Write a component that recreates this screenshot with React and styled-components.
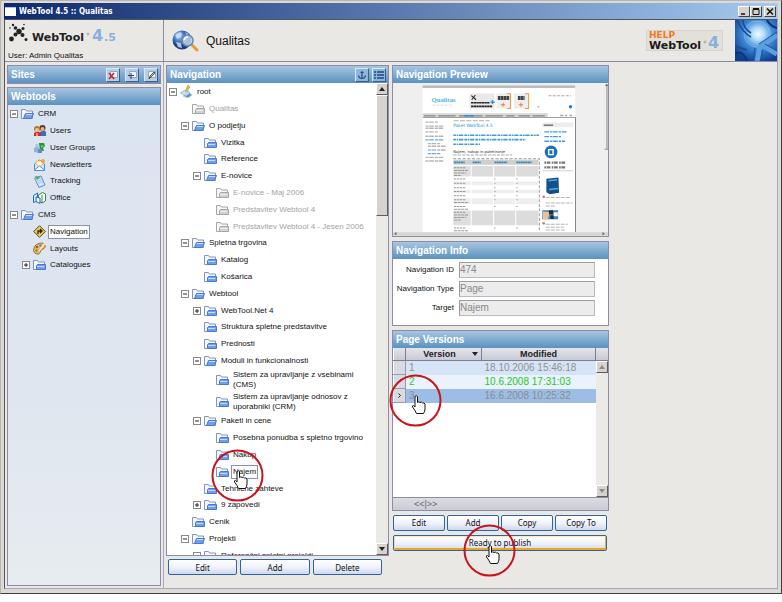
import React from "react";
import styled, { createGlobalStyle, css } from "styled-components";

const GlobalStyle = createGlobalStyle`
  * {
    box-sizing: border-box;
  }
  body {
    margin: 0;
    background: #ffffff;
    font-family: "Liberation Sans", Arial, sans-serif;
    font-size: 8px;
    color: #111111;
  }
  ul {
    list-style: none;
    margin: 0;
    padding: 0;
  }
  button, input {
    font-family: inherit;
    margin: 0;
    padding: 0;
  }
  svg {
    display: block;
    flex-shrink: 0;
  }
`;

/* ---------- window ---------- */

const Window = styled.div`
  display: flex;
  flex-direction: column;
  height: calc(100vh - 8px);
  padding: 2px 3px 4px;
  background: #dddad5;
  border: 1px solid #b8b5b0;
  border-right-color: #404040;
  border-bottom-color: #404040;
`;

const TitleBar = styled.header`
  display: flex;
  align-items: center;
  gap: 3px;
  height: 16px;
  flex-shrink: 0;
  padding: 0 2px 0 1px;
  background: linear-gradient(to right, #0d286c, #a6caf0);
`;

const TitleIcon = styled.span`
  width: 11px;
  height: 9px;
  background: #ffffff;
  border-top: 1px solid #a9c6ef;
`;

const TitleText = styled.h1`
  flex: 1;
  margin: 0;
  font: bold 8px "DejaVu Sans Condensed", "Open Sans", sans-serif;
  color: #ffffff;
`;

const WindowButtons = styled.div`
  display: flex;

  & > :last-child {
    margin-left: 2px;
  }
`;

const WindowButton = styled.button`
  width: 12px;
  height: 11px;
  background: #d6d3ce;
  border: 1px solid;
  border-color: #ffffff #404040 #404040 #ffffff;
`;

const Content = styled.div`
  display: flex;
  flex-direction: column;
  flex: 1;
  min-height: 0;
  background: #eae8e5;
  border: 1px solid #55555c;
  border-right-color: #aaa8bc;
  border-bottom-color: #aaa8bc;
`;

const TopBar = styled.div`
  display: grid;
  grid-template-columns: 159px 1fr auto auto;
  height: 42px;
  flex-shrink: 0;
  border-bottom: 1px solid #8d8ca6;
`;

const Brand = styled.div`
  display: flex;
  flex-direction: column;
  justify-content: space-between;
  padding: 2px 3px 1px;
  border-right: 1px solid #8d8ca6;
`;

const SiteTitle = styled.div`
  display: flex;
  align-items: center;
  gap: 7px;
  padding-left: 8px;
  font-size: 12px;
`;

const HelpLink = styled.a`
  align-self: center;
  margin-right: 12px;
  text-decoration: none;
`;

const Columns = styled.main`
  display: grid;
  grid-template-columns: 159px 225px 220px 1fr;
  flex: 1;
  min-height: 0;
`;

const SideColumn = styled.nav`
  display: flex;
  flex-direction: column;
  gap: 3px;
  min-height: 0;
  padding: 3px 2px 2px 2px;
  border-right: 1px solid #a9a8bf;
`;

const TreeColumn = styled.section`
  display: flex;
  flex-direction: column;
  gap: 3px;
  min-height: 0;
  margin-left: 2px;
  padding: 3px 0 13px;
`;

const DetailColumn = styled.section`
  display: flex;
  flex-direction: column;
  gap: 4px;
  padding: 3px 0 0 3px;
`;

/* ---------- panels ---------- */

const Panel = styled.div`
  display: flex;
  flex-direction: column;
  min-height: 0;
  flex: ${({ $grow }) => ($grow ? 1 : "none")};
  border: 1px solid #8d8ca6;
`;

const PanelHeader = styled.div`
  display: flex;
  align-items: center;
  justify-content: space-between;
  height: 17px;
  flex-shrink: 0;
  padding: 0 2px 0 3px;
  background: linear-gradient(to bottom, #a8c5e2, #5a92c0);
`;

const PanelTitle = styled.h2`
  margin: 0;
  font-size: 10px;
  font-weight: bold;
  color: #ffffff;
`;

const HeaderTools = styled.div`
  display: flex;
  gap: ${({ $gap }) => $gap || 3}px;
`;

const ToolButton = styled.button`
  display: grid;
  place-items: center;
  width: 14px;
  height: 14px;
  background: ${({ $plain }) => ($plain ? "#8fb5da" : "#b9cde4")};
  border: 1px solid;
  border-color: #d9e8f6 #3c5f86 #3c5f86 #d9e8f6;
`;

const SideTree = styled.ul`
  flex: 1;
  padding-left: 2px;
  background: linear-gradient(to bottom, #dbe4f1, #dfe6ef 60%, #e6ecef);
`;

const TreeBody = styled.div`
  display: flex;
  flex: 1;
  min-height: 0;
  background: #ffffff;
`;

const NavTree = styled.ul`
  flex: 1;
  min-width: 0;
  overflow: hidden;
  padding-left: 2px;
`;

const TreeItem = styled.li`
  position: relative;
  display: flex;
  align-items: center;
  height: 17px;
  padding-left: ${({ $depth }) => $depth * 12}px;
  color: ${({ $muted }) => ($muted ? "#a3a3a3" : "#111111")};

  &:nth-child(5n) {
    height: 16px;
  }

  ${({ $tall }) =>
    $tall &&
    css`
      && {
        height: 22px;
      }
    `}
`;

const ToggleSlot = styled.span`
  width: 8px;
  margin-right: 3px;
`;

const Toggle = styled.button`
  display: block;
  width: 8px;
  height: 8px;
  background: #ffffff;
  border: 1px solid #8a8a8a;
`;

const TreeLabel = styled.span`
  margin-left: 3px;
  padding: 1px;
  line-height: 10px;
  white-space: pre-line;
  ${({ $selected }) =>
    $selected &&
    css`
      background: #ffffff;
      outline: 1px solid #8b93a5;
    `}
`;

/* ---------- scroll bars ---------- */

const ScrollBar = styled.div`
  display: flex;
  flex-direction: column;
  width: 12px;
  flex-shrink: 0;
  background: #eceae7;
`;

const ScrollButton = styled.button`
  display: grid;
  place-items: center;
  height: 12px;
  color: ${({ $idle }) => ($idle ? "#8a8a8a" : "#222222")};
  background: #d6d3ce;
  border: 1px solid;
  border-color: #ffffff #5c5c5c #5c5c5c #ffffff;
`;

const ScrollTrack = styled.div`
  flex: 1;
`;

const ScrollThumb = styled.div`
  height: 27%;
  background: #d6d3ce;
  border: 1px solid;
  border-color: #ffffff #5c5c5c #5c5c5c #ffffff;
`;

/* ---------- buttons ---------- */

const ButtonRow = styled.div`
  display: grid;
  grid-auto-flow: column;
  grid-auto-columns: 1fr;
  gap: ${({ $inset }) => ($inset ? 3 : 2)}px;
  padding: ${({ $inset }) => ($inset ? "0 7px 0 2px" : "0 2px 0 1px")};
`;

const ActionButton = styled.button`
  position: relative;
  height: 16px;
  font: 8px "Noto Sans", "Open Sans", sans-serif;
  color: #111111;
  background: linear-gradient(to bottom, #ffffff, #f0f3fb 50%, #cfd8ee);
  border: 1px solid #2f659c;
  border-radius: 2px;
  ${({ $hot }) =>
    $hot &&
    css`
      box-shadow: inset 0 1px #ffe9b5, inset 1px 0 #fbd78b, inset -1px 0 #f2b13c,
        inset 0 -2px #eda51c;
    `}
`;

/* ---------- details ---------- */

const PreviewFrame = styled.div`
  background: #efefef;
`;

const InfoForm = styled.form`
  display: grid;
  grid-template-columns: 61px 1fr;
  gap: 3px 5px;
  padding: 3px 13px 9px 0;
  background: #ffffff;
`;

const FieldLabel = styled.label`
  padding-top: 3px;
  text-align: right;
  white-space: nowrap;
`;

const Field = styled.input`
  width: 100%;
  min-width: 0;
  height: 16px;
  font-size: 10px;
  color: #8a8a8a;
  background: #ececec;
  border: 1px solid;
  border-color: #9c9ca4 #b9b9bf #b9b9bf #9c9ca4;
`;

const VersionsBody = styled.div`
  display: flex;
  height: 149px;
  background: #ffffff;
`;

const TableArea = styled.div`
  flex: 1;
`;

const VersionsTable = styled.table`
  width: 100%;
  table-layout: fixed;
  border-collapse: collapse;

  col:first-child {
    width: 12px;
  }
  col:nth-child(2) {
    width: 76px;
  }
`;

const HeadCell = styled.th`
  position: relative;
  height: 13px;
  padding: 0;
  font-size: 9px;
  font-weight: bold;
  color: #222222;
  background: linear-gradient(to bottom, #e4e4ea, #c8cad4);
  border-right: 1px solid #7c7c92;
  border-bottom: 1px solid #7c7c92;
`;

const HeadLabel = styled.span`
  display: flex;
  align-items: center;
  justify-content: center;
  padding-right: 8px;

  svg {
    position: absolute;
    right: 3px;
  }
`;

const rowColors = {
  old: ["#d5e4f6", "#909090"],
  live: ["#ebf2fb", "#18cc24"],
  current: ["#9cbde6", "#8a8c92"],
};

const VersionRow = styled.tr`
  background: ${({ $state }) => rowColors[$state][0]};
  color: ${({ $state }) => rowColors[$state][1]};
`;

const Cell = styled.td`
  position: relative;
  height: 14px;
  padding: 0 3px;
  font-size: 10px;
  line-height: 12px;
  white-space: nowrap;
`;

const MarkerCell = styled(Cell)`
  padding: 0 4px;
  background: #d9dbe3;
  border: 1px solid;
  border-color: #ffffff #9a9aae #9a9aae #ffffff;
`;

const ScrollHead = styled.div`
  height: 13px;
  background: linear-gradient(to bottom, #e4e4ea, #c8cad4);
  border-bottom: 1px solid #7c7c92;
`;

const Splitter = styled.div`
  height: 13px;
  padding-left: 21px;
  font-size: 9px;
  line-height: 12px;
  color: #666672;
  background: linear-gradient(to bottom, #dcdde3, #cbccd4);
  border-top: 1px solid #8d8ca6;
`;

const Callout = styled.span`
  position: absolute;
  z-index: 5;
  left: ${({ $x }) => $x};
  top: ${({ $y }) => $y}px;
  pointer-events: none;
`;

/* ---------- drawings ---------- */

const Arrow = ({ up }) => (
  <svg width="6" height="4" viewBox="0 0 6 4">
    <path d={up ? "M3 0L6 4H0z" : "M0 0h6L3 4z"} fill="currentColor" />
  </svg>
);

const HandCircle = ({ x, y }) => (
  <Callout $x={x} $y={y} aria-hidden="true">
    <svg width="53" height="53" viewBox="0 0 53 53">
      <circle cx="26.500" cy="26.500" r="25" fill="none" stroke="#c8151b" strokeWidth="2" />
      <path
        d="M26 22.500q1.500-1.500 2.500 0v6q1.500-1.500 2.500 0 1.500-1 2.500.5 1.500-.5 2.500 1V35q0 2-1.500 4.500h-7Q26 36 23.500 33q-.5-1.500 1-1.500L26 33z"
        fill="#fff"
        stroke="#111"
      />
    </svg>
  </Callout>
);

const Folder = ({ open, muted }) => {
  const edge = muted ? "#a6a6a6" : "#8296bd";
  const fill = muted ? "#d2d2d2" : "#6f9fee";
  return (
    <svg width="13" height="12" viewBox="0 0 13 12">
      <path d="M.5 10.500v-9h4l1 1.500h6v7.500z" fill="#f4f7fd" stroke={edge} />
      <path d={open ? "M2.500 10.500l2-5h8l-2 5z" : "M3.500 10.500V7l1-1.500h8v5z"} fill={fill} stroke={muted ? edge : "#4a78cc"} />
      <path d={open ? "M5 6.500h6" : "M4 7.500h7"} stroke={muted ? "#eee" : "#c5dbff"} />
    </svg>
  );
};

const RootIcon = () => (
  <svg width="13" height="13" viewBox="0 0 13 13">
    <path d="M3 11l5-5 4 4-4 3z" fill="#4f93d8" stroke="#b5cfe9" />
    <path d="M0 8l5-3 5 3-4 3z" fill="#c4dcf3" stroke="#8fb4dc" strokeWidth=".6" />
    <path d="M8 0L5.500 6l1 1 3.500-5z" fill="#e9bf42" stroke="#99792c" strokeWidth=".5" />
  </svg>
);

const UsersIcon = () => (
  <svg width="13" height="13" viewBox="0 0 13 13">
    <path d="M7 12V8l2-1h3l1 1v4z" fill="#3a6fc0" />
    <circle cx="9.500" cy="4" r="3" fill="#5b3423" />
    <circle cx="9.500" cy="5" r="2" fill="#e8b487" />
    <path d="M1 12V9l2-1h3l2 1v3z" fill="#cf2c26" />
    <circle cx="4" cy="5" r="3" fill="#b3742c" />
    <circle cx="4" cy="6" r="2" fill="#f1c79a" />
    <path d="M3.500 9h1v3h-1z" fill="#fff" />
  </svg>
);

const GroupsIcon = () => (
  <svg width="13" height="13" viewBox="0 0 13 13">
    <path d="M1 11V7l2-1h3v6z" fill="#8fb5d8" />
    <circle cx="4" cy="4.500" r="1.800" fill="#a8c8e4" />
    <path d="M6 2h5l1 3-2 2 1 3H7z" fill="#299343" />
    <path d="M8 4l3 1-3 2z" fill="#7ad06c" />
    <path d="M5 8h4v4H5z" fill="#5c8fc9" />
  </svg>
);

const NewsIcon = () => (
  <svg width="13" height="13" viewBox="0 0 13 13">
    <path d="M1.500 12.500V6L6.500 2l5 4v6.500z" fill="#cfe6fb" stroke="#4b8fd0" />
    <path d="M3 6V3h7v3L6.500 9z" fill="#fff4cf" stroke="#e2a23d" strokeWidth=".7" />
    <path d="M1.500 12L6.500 8l5 4" fill="#fff" stroke="#4b8fd0" />
    <circle cx="10" cy="3" r="2" fill="#f0a53a" />
  </svg>
);

const TrackingIcon = () => (
  <svg width="13" height="13" viewBox="0 0 13 13">
    <path d="M1.500 3L8 1l4 9-6 2.500z" fill="#d6e7fc" stroke="#5b8bd0" />
    <path d="M3 4l5-1M4 6l5-1M5 8l5-1" stroke="#a5c4f0" />
    <path d="M2 1l5 1-3 3z" fill="#41b34c" />
  </svg>
);

const OfficeIcon = () => (
  <svg width="13" height="13" viewBox="0 0 13 13">
    <path d="M.5 4.500L4.500 2v8l-4 1.500z" fill="#d5e9ff" stroke="#2769c5" />
    <path d="M5.500 4l4-2.500 3 1.500v7L9 12l-3.500-2z" fill="#fff" stroke="#2f8d4c" />
    <path d="M3 6l4 1v5.500l-4-2z" fill="#eaf4ff" stroke="#2769c5" />
    <path d="M9 4v8" stroke="#2f8d4c" />
  </svg>
);

const SignIcon = () => (
  <svg width="13" height="13" viewBox="0 0 13 13">
    <path d="M6.500.7l5.800 5.800-5.800 5.800L.7 6.500z" fill="#f2cd55" stroke="#57461e" />
    <path d="M5 9V6h3M7 4l2 2-2 2" fill="none" stroke="#222" strokeWidth="1.300" />
  </svg>
);

const PaletteIcon = () => (
  <svg width="13" height="13" viewBox="0 0 13 13">
    <path d="M6 1.500c4-1.500 7 1 6 4-1 2-3 1-4 3s-1 4-4 3.500S0 9 1 6s3-4 5-4.500z" fill="#eab667" stroke="#a86d2b" />
    <circle cx="4" cy="5" r="1.200" fill="#d6372e" />
    <circle cx="7.500" cy="3.500" r="1.200" fill="#4d8edb" />
    <circle cx="3.500" cy="8.500" r="1.200" fill="#55a944" />
    <path d="M12 1L6 9" stroke="#f8f1d6" strokeWidth="1.300" />
  </svg>
);

const WebToolLogo = () => (
  <svg width="112" height="27" viewBox="0 0 112 27" role="img" aria-label="WebTool 4.5">
    <g fill="#222">
      <circle cx="5" cy="3" r="1.200" />
      <circle cx="7.500" cy="6" r="1.800" />
      <circle cx="11" cy="9.500" r="2.700" />
      <circle cx="14.500" cy="13" r="2" />
      <circle cx="18" cy="17.500" r="1.500" />
      <circle cx="15" cy="6.500" r="1.500" />
      <circle cx="7.500" cy="12.500" r="2" />
      <circle cx="3.500" cy="17" r="2.400" />
      <circle cx="16" cy="2.500" r=".8" />
      <circle cx="2" cy="6" r=".8" />
    </g>
    <g fontFamily="DejaVu Sans" fontWeight="bold">
      <text x="24" y="19" fontSize="11" fill="#222">WebTool</text>
      <text x="84" y="19" fontSize="16" fill="#86b1de">4</text>
      <text x="96" y="19" fontSize="11" fill="#86b1de">.5</text>
    </g>
    <circle cx="80" cy="12" r="1" fill="none" stroke="#777" strokeWidth=".5" />
  </svg>
);

const HelpLogo = () => (
  <svg width="77" height="21" viewBox="0 0 77 21" role="img" aria-label="HELP WebTool 4">
    <rect x=".5" y=".5" width="76" height="20" fill="#e2e0d9" stroke="#d6d4cc" />
    <g fontFamily="DejaVu Sans" fontWeight="bold">
      <text x="3" y="8" fontSize="9" fill="#f5771f">HELP</text>
      <text x="3" y="19" fontSize="11" fill="#1b1b1b">WebTool</text>
      <text x="62" y="18" fontSize="16" fill="#86b1de">4</text>
    </g>
    <circle cx="59" cy="12" r="1" fill="none" stroke="#777" strokeWidth=".5" />
  </svg>
);

const GlobeSearch = () => (
  <svg width="27" height="22" viewBox="0 0 27 22">
    <defs>
      <radialGradient id="globe" cx=".35" cy=".3">
        <stop offset="0" stopColor="#a9cdf5" />
        <stop offset=".6" stopColor="#3f74bd" />
        <stop offset="1" stopColor="#1b3d80" />
      </radialGradient>
    </defs>
    <circle cx="10" cy="10" r="9.500" fill="url(#globe)" />
    <path d="M3 5q4-4 7-2l-1 4-4 2zM4 12l5 1 1 5-4-1zM13 2l4 2-2 2z" fill="#d2e5f8" opacity=".8" />
    <path d="M19 14l6 6" stroke="#e79a35" strokeWidth="3" strokeLinecap="round" />
    <circle cx="15.500" cy="10.500" r="5.500" fill="#c7e1f8" fillOpacity=".8" stroke="#6c87ad" strokeWidth="1.500" />
    <path d="M12 10q1-3 4-3" fill="none" stroke="#fff" strokeWidth="1.500" />
  </svg>
);

const CornerArt = () => (
  <svg width="42" height="41" viewBox="0 0 42 41">
    <defs>
      <radialGradient id="glow" cx=".55" cy=".34" r=".7">
        <stop offset="0" stopColor="#f2fbff" />
        <stop offset=".2" stopColor="#b5dffb" />
        <stop offset=".5" stopColor="#3f8bd6" />
        <stop offset="1" stopColor="#0d3f8e" />
      </radialGradient>
    </defs>
    <rect width="42" height="41" fill="url(#glow)" />
    <circle cx="22" cy="14" r="13" fill="none" stroke="#9fcdf4" opacity=".5" />
    <path d="M2 0q6 13 14 17M8 0q0 8 8 13M0 26l12 4" fill="none" stroke="#174a90" strokeWidth="1.500" />
    <path d="M42 15L25 27l-3 14M27 25l15 9" fill="none" stroke="#5a9fe0" strokeWidth="5" />
    <path d="M42 12L24 24M20 28l-2 13M30 24l12 7M27 30v11" fill="none" stroke="#174f9c" />
    <path d="M0 34q7-5 12 7M32 0q3 6 10 8" fill="none" stroke="#0b3274" strokeWidth="2" />
  </svg>
);

const ToolIcon = ({ kind }) => (
  <svg width="10" height="10" viewBox="0 0 10 10">
    {kind !== "anchor" && kind !== "list" && (
      <path d="M2.500 1.500h7v6h-7z" fill="#eef4fb" stroke="#8fa6c4" />
    )}
    {kind === "delete" && <path d="M1 3l5 6M6 3L1 9" stroke="#d01f1f" strokeWidth="1.500" />}
    {kind === "add" && <path d="M1 5.500h6M4 3v6" stroke="#23425f" />}
    {kind === "edit" && <path d="M3 9l1-3 4-4 1 1-4 4z" fill="#d8c04c" stroke="#333" strokeWidth=".8" />}
    {kind === "anchor" && (
      <path d="M5 1v8M3.500 2.500h3M1.500 5.500q.5 3 3.500 3t3.500-3" fill="none" stroke="#1d4a86" strokeWidth="1.200" />
    )}
    {kind === "list" && (
      <path d="M0 2h2M0 5h2M0 8h2M3 2h7M3 5h7M3 8h7" stroke="#1d4a86" strokeWidth="1.400" />
    )}
  </svg>
);

// thumbnail of the page that is being edited
const menuLines = [187, 199, 205, 216, 229, 240, 251, 259, 270, 281, 292, 303];
const tableRows = [
  [318, 31, true],
  [352, 9, false],
  [364, 11, true],
  [378, 9, false],
  [389, 10, true],
  [402, 9, false],
  [414, 18, true],
  [434, 15, false],
  [451, 44, true],
  [498, 16, false],
];

const PagePreview = () => (
  <svg width="100%" viewBox="26 70 642 456" role="img" aria-label="Page preview">
    <rect x="114" y="77" width="456" height="439" fill="#fff" />
    <rect x="114" y="77" width="456" height="8" fill="#bdbdbd" />
    <text x="141" y="126" fontFamily="Liberation Serif" fontSize="20" fontWeight="bold" fill="#55b5d8">
      Qualitas
    </text>
    <path d="M144 136h62" stroke="#cfe7f2" strokeWidth="4" strokeDasharray="9 3" />
    <rect x="254" y="101" width="74" height="45" fill="#e9e9e9" />
    <path d="M260 108l14 12M272 106l-11 14" stroke="#222" strokeWidth="3" />
    <path d="M259 129h56M259 140h64" stroke="#222" strokeWidth="5" strokeDasharray="7 1" />
    <path d="M317 127h13M323 121v12" stroke="#3186e0" strokeWidth="4" />
    <rect x="335" y="101" width="42" height="45" fill="#eeeeee" />
    <rect x="387" y="101" width="42" height="45" fill="#eeeeee" />
    <path d="M339 115h34M399 115h20" stroke="#444" strokeWidth="12" strokeDasharray="8 1" />
    <path d="M348 135h13M355 129v12M401 135h13M408 129v12" stroke="#ef7e2c" strokeWidth="3" />
    <path d="M366 102h11v44h-11M420 102h11v44h-11" fill="none" stroke="#f19445" strokeWidth="3" />
    <path d="M490 108h68" stroke="#aaa" strokeWidth="3" strokeDasharray="9 4" />
    <circle cx="556" cy="141" r="5" fill="#207fce" />
    <circle cx="460" cy="141" r="3" fill="#bbb" />
    <path d="M115 160h373v12H115z" fill="#d5d5d5" />
    <path d="M115 173h456" stroke="#777" strokeWidth="2" />
    <path d="M119 168h360" stroke="#888" strokeWidth="4" strokeDasharray="34 8 52 10 25 12" />
    <path d="M239 168h28" stroke="#3392d4" strokeWidth="5" />
    <path d="M525 167h10M540 167h6M553 167h8" stroke="#aaa" strokeWidth="4" />
    {menuLines.map((y, i) => (
      <path key={y} d={`M${i > 5 && i < 10 ? 130 : 123} ${y}h${i % 3 ? 54 : 38}`}
        stroke={i === 5 || i === 9 ? "#5fade0" : "#b5b5b5"} strokeWidth="4" strokeDasharray="9 2 14 3" />
    ))}
    <path d="M207 183h108" stroke="#c5a99d" strokeWidth="3" strokeDasharray="15 4" />
    <text x="206" y="201" fontFamily="DejaVu Sans" fontSize="13" fill="#2796cf">Paket WebTool 4.5</text>
    <path d="M206 226h256M206 239h216M206 253h80" stroke="#3b9fd3" strokeWidth="5" strokeDasharray="8 2 5 2 13 3" />
    <text x="206" y="279" fontFamily="DejaVu Sans" fontSize="11" fill="#333">Najem, nakup in paketiranje</text>
    <path d="M206 285h176" stroke="#aaa" strokeWidth="3" strokeDasharray="10 3" />
    <path d="M206 296h257v220" fill="none" stroke="#999" strokeWidth="3" strokeDasharray="9 5" />
    <rect x="206" y="299" width="254" height="15" fill="#cfcfcf" />
    <path d="M208 307h32M264 307h24M329 307h38M394 307h46" stroke="#3289bb" strokeWidth="5" strokeDasharray="6 1" />
    {tableRows.map(([y, h, dark]) => (
      <g key={y}>
        <path d={`M206 ${y}h52v${h}h-52z`} fill={h > 25 ? "#dedede" : dark ? "#eeeeee" : "#fff"} />
        <path d={`M261 ${y}h64v${h}h-64zM328 ${y}h63v${h}h-63zM394 ${y}h66v${h}h-66z`}
          fill={h > 25 ? "#dcdcdc" : dark ? "#eeeeee" : "#fff"} />
        <path d={`M208 ${y + 5}h36`} stroke="#999" strokeWidth="3" strokeDasharray="7 2" />
        {h > 14 && <path d={`M208 ${y + 13}h42`} stroke="#999" strokeWidth="3" strokeDasharray="9 2" />}
        {h > 25 && <path d={`M208 ${y + 21}h36M208 ${y + 28}h20`} stroke="#999" strokeWidth="3" strokeDasharray="9 2" />}
        {h < 20 && <path d={`M328 ${y + 5}h4M394 ${y + 5}h4`} stroke="#999" strokeWidth="3" />}
      </g>
    ))}
    <path d="M472 188h92v14h-92z" fill="#ededed" />
    <path d="M476 196h28" stroke="#666" strokeWidth="4" />
    <path d="M478 216h68M478 230h52M478 244h62" stroke="#3b9fd3" strokeWidth="4" strokeDasharray="14 3 7 2" />
    <circle cx="498" cy="276" r="19" fill="#1f70b6" />
    <path d="M491 269h13v15h-13z" fill="none" stroke="#fff" strokeWidth="4" />
    <path d="M478 308h66M478 322h66" stroke="#777" strokeWidth="7" strokeDasharray="5 2 11 4" />
    <path d="M472 332h92" stroke="#bbb" strokeWidth="2" />
    <path d="M484 356l36-4 2 46-28 4-10-6z" fill="#12508c" />
    <path d="M490 362l26-3M492 388l28-3" stroke="#5fa3dc" strokeWidth="5" />
    <path d="M482 412h72M482 428h80M482 437h28" stroke="#b5b5b5" strokeWidth="3" strokeDasharray="12 3" />
    <circle cx="476" cy="410" r="4" fill="#d67c64" />
    <rect x="472" y="450" width="47" height="27" fill="#4384b5" />
    <path d="M474 454l20 2-5 20h-15z" fill="#efc095" />
    <path d="M492 450h12v12h-12zM496 466h10v10h-10z" fill="#202d3a" />
    <path d="M506 456h12v12h-12z" fill="#fff" />
    <circle cx="476" cy="489" r="4" fill="#d67c64" />
    <path d="M482 492h66M482 501h54M482 509h60" stroke="#b5b5b5" strokeWidth="3" strokeDasharray="12 3" />
    <path d="M571 172v344" stroke="#888" strokeWidth="3" />
    <path d="M26 521h642" stroke="#d7d5d2" strokeWidth="10" />
    <path d="M665 76v192M658 268h10" stroke="#8c8c92" strokeWidth="3" />
    <path d="M659 78l5-6 5 6zM36 515l-6 5 6 5zM652 515l6 5-6 5z" fill="#555" />
  </svg>
);

/* ---------- data ---------- */

const webtools = [
  { text: "CRM", depth: 0, toggle: "-", open: true },
  { text: "Users", depth: 1, icon: <UsersIcon /> },
  { text: "User Groups", depth: 1, icon: <GroupsIcon /> },
  { text: "Newsletters", depth: 1, icon: <NewsIcon /> },
  { text: "Tracking", depth: 1, icon: <TrackingIcon /> },
  { text: "Office", depth: 1, icon: <OfficeIcon /> },
  { text: "CMS", depth: 0, toggle: "-", open: true },
  { text: "Navigation", depth: 1, icon: <SignIcon />, selected: true },
  { text: "Layouts", depth: 1, icon: <PaletteIcon /> },
  { text: "Catalogues", depth: 1, toggle: "+" },
];

const pages = [
  { text: "root", depth: 0, toggle: "-", icon: <RootIcon /> },
  { text: "Qualitas", depth: 1, muted: true },
  { text: "O podjetju", depth: 1, toggle: "-", open: true },
  { text: "Vizitka", depth: 2 },
  { text: "Reference", depth: 2 },
  { text: "E-novice", depth: 2, toggle: "-", open: true },
  { text: "E-novice - Maj 2006", depth: 3, muted: true },
  { text: "Predstavitev Webtool 4", depth: 3, muted: true },
  { text: "Predstavitev Webtool 4 - Jesen 2006", depth: 3, muted: true },
  { text: "Spletna trgovina", depth: 1, toggle: "-", open: true },
  { text: "Katalog", depth: 2 },
  { text: "Košarica", depth: 2 },
  { text: "Webtool", depth: 1, toggle: "-", open: true },
  { text: "WebTool.Net 4", depth: 2, toggle: "+" },
  { text: "Struktura spletne predstavitve", depth: 2 },
  { text: "Prednosti", depth: 2 },
  { text: "Moduli in funkcionalnosti", depth: 2, toggle: "-", open: true },
  { text: "Sistem za upravljanje z vsebinami\n(CMS)", depth: 3, tall: true },
  { text: "Sistem za upravljanje odnosov z\nuporabniki (CRM)", depth: 3, tall: true },
  { text: "Paketi in cene", depth: 2, toggle: "-", open: true },
  { text: "Posebna ponudba s spletno trgovino", depth: 3 },
  { text: "Nakup", depth: 3 },
  { text: "Najem", depth: 3, selected: true, callout: true },
  { text: "Tehnične zahteve", depth: 2 },
  { text: "9 zapovedi", depth: 2, toggle: "+" },
  { text: "Cenik", depth: 1 },
  { text: "Projekti", depth: 1, toggle: "-", open: true },
  { text: "Referenčni spletni projekti", depth: 2, toggle: "-", open: true },
];

const info = [
  { id: "nav-id", label: "Navigation ID", value: "474" },
  { id: "nav-type", label: "Navigation Type", value: "Page" },
  { id: "nav-target", label: "Target", value: "Najem" },
];

const versions = [
  { version: 1, modified: "18.10.2006 15:46:18", state: "old" },
  { version: 2, modified: "10.6.2008 17:31:03", state: "live" },
  { version: 3, modified: "16.6.2008 10:25:32", state: "current" },
];

/* ---------- parts ---------- */

const TreeNode = ({ node }) => (
  <TreeItem $depth={node.depth} $muted={node.muted} $tall={node.tall}>
    <ToggleSlot>
      {node.toggle && (
        <Toggle type="button" aria-label={node.text} aria-expanded={node.toggle === "-"}>
          <svg width="6" height="6" viewBox="0 0 6 6">
            <path d={node.toggle === "-" ? "M1 3h4" : "M1 3h4M3 1v4"} stroke="#222" />
          </svg>
        </Toggle>
      )}
    </ToggleSlot>
    {node.icon || <Folder open={node.open} muted={node.muted} />}
    <TreeLabel $selected={node.selected}>{node.text}</TreeLabel>
    {node.callout && <HandCircle x="42px" y={-14} />}
  </TreeItem>
);

const App = () => {
  return (
    <>
      <GlobalStyle />
      <Window>
        <TitleBar>
          <TitleIcon />
          <TitleText>WebTool 4.5 :: Qualitas</TitleText>
          <WindowButtons>
            <WindowButton type="button" aria-label="Minimize">
              <svg width="10" height="9" viewBox="0 0 10 9">
                <path d="M2 7h4" stroke="#111" strokeWidth="1.500" />
              </svg>
            </WindowButton>
            <WindowButton type="button" aria-label="Maximize">
              <svg width="10" height="9" viewBox="0 0 10 9">
                <path d="M2 2.500h6v5H2zM2 1.500h6" fill="none" stroke="#111" />
              </svg>
            </WindowButton>
            <WindowButton type="button" aria-label="Close">
              <svg width="10" height="9" viewBox="0 0 10 9">
                <path d="M2 1.500l6 6M8 1.500l-6 6" stroke="#111" strokeWidth="1.500" />
              </svg>
            </WindowButton>
          </WindowButtons>
        </TitleBar>
        <Content>
          <TopBar>
            <Brand>
              <WebToolLogo />
              <span>User: Admin Qualitas</span>
            </Brand>
            <SiteTitle>
              <GlobeSearch />
              Qualitas
            </SiteTitle>
            <HelpLink href="#help">
              <HelpLogo />
            </HelpLink>
            <CornerArt />
          </TopBar>
          <Columns>
            <SideColumn>
              <Panel>
                <PanelHeader>
                  <PanelTitle>Sites</PanelTitle>
                  <HeaderTools $gap={5}>
                    <ToolButton type="button" aria-label="Delete site">
                      <ToolIcon kind="delete" />
                    </ToolButton>
                    <ToolButton type="button" aria-label="Add site">
                      <ToolIcon kind="add" />
                    </ToolButton>
                    <ToolButton type="button" aria-label="Edit site">
                      <ToolIcon kind="edit" />
                    </ToolButton>
                  </HeaderTools>
                </PanelHeader>
              </Panel>
              <Panel $grow>
                <PanelHeader>
                  <PanelTitle>Webtools</PanelTitle>
                </PanelHeader>
                <SideTree>
                  {webtools.map((node) => (
                    <TreeNode key={node.text} node={node} />
                  ))}
                </SideTree>
              </Panel>
            </SideColumn>
            <TreeColumn>
              <Panel $grow>
                <PanelHeader>
                  <PanelTitle>Navigation</PanelTitle>
                  <HeaderTools>
                    <ToolButton $plain type="button" aria-label="Anchor">
                      <ToolIcon kind="anchor" />
                    </ToolButton>
                    <ToolButton $plain type="button" aria-label="List">
                      <ToolIcon kind="list" />
                    </ToolButton>
                  </HeaderTools>
                </PanelHeader>
                <TreeBody>
                  <NavTree>
                    {pages.map((node) => (
                      <TreeNode key={node.text} node={node} />
                    ))}
                  </NavTree>
                  <ScrollBar>
                    <ScrollButton type="button" aria-label="Scroll up">
                      <Arrow up />
                    </ScrollButton>
                    <ScrollTrack>
                      <ScrollThumb />
                    </ScrollTrack>
                    <ScrollButton type="button" aria-label="Scroll down">
                      <Arrow />
                    </ScrollButton>
                  </ScrollBar>
                </TreeBody>
              </Panel>
              <ButtonRow $inset>
                <ActionButton type="button">Edit</ActionButton>
                <ActionButton type="button">Add</ActionButton>
                <ActionButton type="button">Delete</ActionButton>
              </ButtonRow>
            </TreeColumn>
            <DetailColumn>
              <Panel>
                <PanelHeader>
                  <PanelTitle>Navigation Preview</PanelTitle>
                </PanelHeader>
                <PreviewFrame>
                  <PagePreview />
                </PreviewFrame>
              </Panel>
              <Panel>
                <PanelHeader>
                  <PanelTitle>Navigation Info</PanelTitle>
                </PanelHeader>
                <InfoForm>
                  {info.map(({ id, label, value }) => (
                    <React.Fragment key={id}>
                      <FieldLabel htmlFor={id}>{label}</FieldLabel>
                      <Field id={id} defaultValue={value} readOnly />
                    </React.Fragment>
                  ))}
                </InfoForm>
              </Panel>
              <Panel>
                <PanelHeader>
                  <PanelTitle>Page Versions</PanelTitle>
                </PanelHeader>
                <VersionsBody>
                  <TableArea>
                    <VersionsTable>
                      <colgroup>
                        <col />
                        <col />
                        <col />
                      </colgroup>
                      <thead>
                        <tr>
                          <HeadCell aria-label="Current" />
                          <HeadCell>
                            <HeadLabel>
                              Version
                              <Arrow />
                            </HeadLabel>
                          </HeadCell>
                          <HeadCell>Modified</HeadCell>
                        </tr>
                      </thead>
                      <tbody>
                        {versions.map(({ version, modified, state }) => (
                          <VersionRow key={version} $state={state}>
                            <MarkerCell>
                              {state === "current" && (
                                <svg width="3" height="5" viewBox="0 0 3 5">
                                  <path d="M.5.5l2 2-2 2" fill="none" stroke="#222" />
                                </svg>
                              )}
                            </MarkerCell>
                            <Cell>
                              {version}
                              {state === "current" && <HandCircle x="-17px" y={-15} />}
                            </Cell>
                            <Cell>{modified}</Cell>
                          </VersionRow>
                        ))}
                      </tbody>
                    </VersionsTable>
                  </TableArea>
                  <ScrollBar>
                    <ScrollHead />
                    <ScrollButton $idle type="button" aria-label="Scroll up">
                      <Arrow up />
                    </ScrollButton>
                    <ScrollTrack />
                    <ScrollButton $idle type="button" aria-label="Scroll down">
                      <Arrow />
                    </ScrollButton>
                  </ScrollBar>
                </VersionsBody>
                <Splitter>&lt;&lt;|&gt;&gt;</Splitter>
              </Panel>
              <ButtonRow>
                <ActionButton type="button">Edit</ActionButton>
                <ActionButton type="button">Add</ActionButton>
                <ActionButton type="button">Copy</ActionButton>
                <ActionButton type="button">Copy To</ActionButton>
              </ButtonRow>
              <ButtonRow>
                <ActionButton type="button" $hot>
                  Ready to publish
                  <HandCircle x="calc(50% - 37px)" y={-12} />
                </ActionButton>
              </ButtonRow>
            </DetailColumn>
          </Columns>
        </Content>
      </Window>
    </>
  );
};

export default App;
